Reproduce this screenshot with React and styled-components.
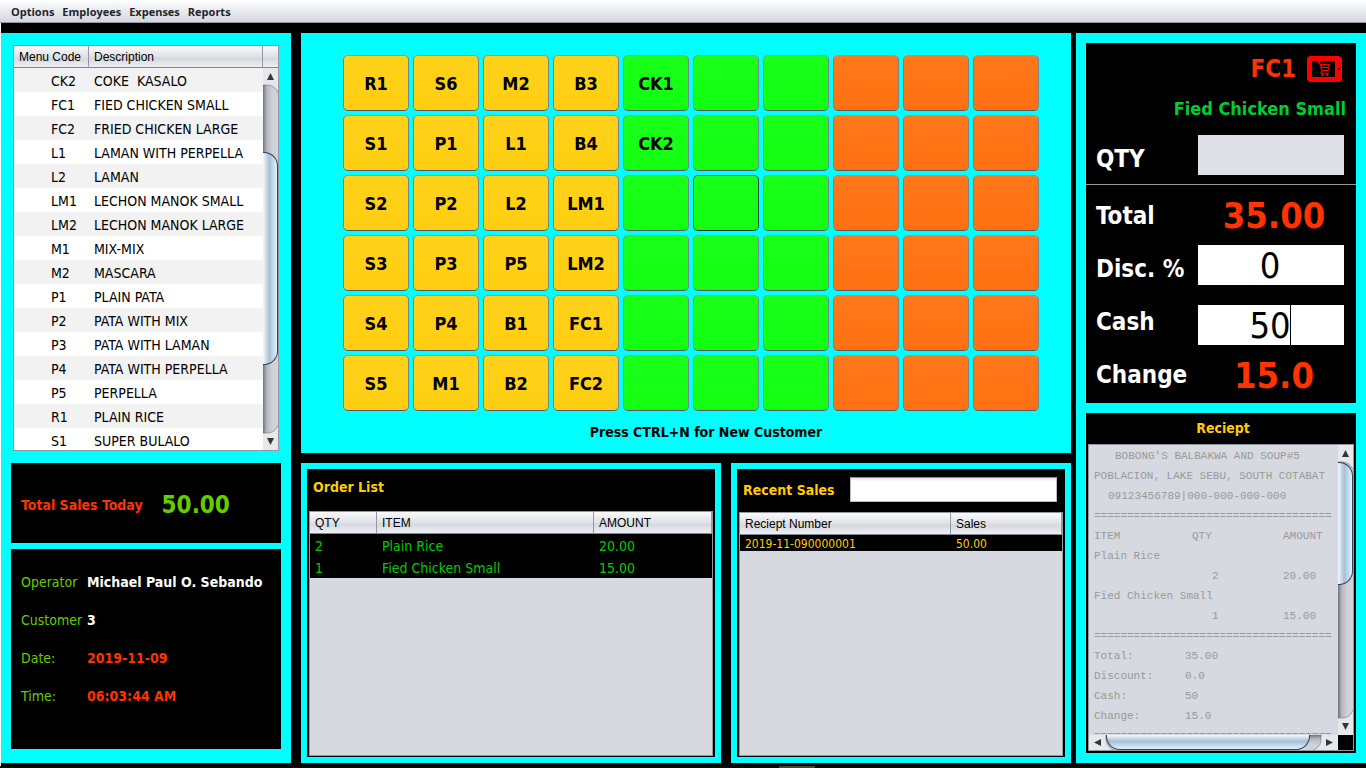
import React from "react";
import styled, { createGlobalStyle, css } from "styled-components";

const ui = '"DejaVu Sans Condensed", "DejaVu Sans", Tahoma, sans-serif';
const headFont = '"Liberation Sans", Arial, sans-serif';

const colors = {
  cyan: "#00ffff",
  red: "#ff3300",
  lime: "#66cc00",
  gold: "#ffcc00",
  pane: "#d6d9df",
};

const GlobalStyle = createGlobalStyle`
  * { box-sizing: border-box; }
  body { margin: 0; background: #000; font-family: ${ui}; font-size: 14px; color: #000; }
  button, input { font: inherit; color: inherit; margin: 0; }
  h2 { margin: 0; }
`;

const Page = styled.div`
  display: flex;
  flex-direction: column;
  min-height: 100vh;
  background: #000;
`;

const MenuBar = styled.nav`
  display: flex;
  align-items: center;
  gap: 8px;
  height: 23px;
  padding: 0 11px;
  background: linear-gradient(#ffffff, #eceef2 40%, #d3d6de);
  border-bottom: 1px solid #9297a1;
`;

const MenuButton = styled.button`
  border: 0;
  padding: 2px 0 0;
  background: none;
  font-family: "Open Sans", "Noto Sans", sans-serif;
  font-size: 11px;
  line-height: 20px;
  font-weight: 700;
  color: #22252b;
`;

const Main = styled.main`
  flex: 1;
  display: flex;
  padding: 10px 0 3px;
  border-left: 1px solid #fff;
`;

const BottomEdge = styled.footer`
  height: 2px;
  padding-left: 57%;
  background: #0a0a0a;
`;

const BottomMark = styled.div`
  width: 36px;
  height: 2px;
  background: #444;
`;

const Side = styled.section`
  flex: none;
  width: 290px;
  display: flex;
  flex-direction: column;
  background: ${colors.cyan};
`;

const LeftSide = styled(Side)`
  padding: 12px 10px 14px;
`;

const RightSide = styled(Side)`
  gap: 10px;
  padding: 10px;
`;

const Center = styled.div`
  flex: 1;
  display: flex;
  flex-direction: column;
  gap: 10px;
  margin: 0 5px 0 10px;
`;

const Card = styled.div`
  background: #000;
`;

const Pane = styled.div`
  flex: 1 1 0;
  min-height: 0;
  display: flex;
  overflow: hidden;
  border: 1px solid #9297a1;
  background: ${(p) => p.$bg || colors.pane};
`;

const MenuPane = styled(Pane)`
  min-height: 240px;
  margin: 0 2px 12px;
`;

const PaneBody = styled.div`
  flex: 1;
  min-width: 0;
  overflow: hidden;
`;

const headBackground = css`
  background: linear-gradient(#fbfbfc, #dfe1e6 50%, #d5d8df 60%, #eef0f4);
  border-bottom: 1px solid #808791;
`;

const Table = styled.table`
  width: 100%;
  table-layout: fixed;
  border-collapse: separate;
  border-spacing: 0;

  th {
    ${headBackground}
    height: 22px;
    padding: 0 5px;
    border-right: 1px solid #9297a1;
    font: 12px/20px ${headFont};
    text-align: left;
    white-space: nowrap;
  }
  td {
    padding: 2px 5px 0;
    white-space: pre;
  }
`;

const MenuTable = styled(Table)`
  td {
    height: 24px;
    font-size: 14px;
    line-height: 22px;
  }
  td:first-child { padding-left: 37px; }
  tbody tr:nth-child(odd) { background: #f2f2f2; }
`;

const OrderTable = styled(Table)`
  td {
    background: #000;
    color: #00cc00;
    height: 22px;
    line-height: 20px;
    font-size: 14px;
  }
`;

const SalesTable = styled(Table)`
  td {
    background: #000;
    color: ${colors.gold};
    height: 16px;
    line-height: 14px;
    font-size: 12px;
  }
`;

const ScrollColumn = styled.div`
  flex: none;
  width: 15px;
  display: flex;
  flex-direction: column;
`;

const HeadCorner = styled.div`
  ${headBackground}
  height: 22px;
`;

const ScrollTrack = styled.div`
  flex: 1;
  display: flex;
  flex-direction: ${(p) => (p.$horizontal ? "row" : "column")};
  background: linear-gradient(${(p) => (p.$horizontal ? "180deg" : "90deg")}, #6e727a, #b4b7be 25%, #cdd0d6 60%, #d3d5da);
`;

const ArrowButton = styled.button`
  flex: none;
  width: ${(p) => (p.$horizontal ? 17 : 15)}px;
  height: ${(p) => (p.$horizontal ? 15 : 17)}px;
  border: 0;
  padding: 0;
  background: none;

  svg { display: block; overflow: visible; }
`;

const Gap = styled.div`
  flex: ${(p) => p.$size} 1 0;
`;

const Thumb = styled.div`
  flex: ${(p) => p.$size} 1 0;
  border: 1px solid #2c4058;
  ${(p) =>
    p.$horizontal
      ? css`
          border-top: 0;
          border-radius: 0 0 14px 14px;
          background: linear-gradient(#f4f8fb, #c9d8e5 25%, #a9bfd4 45%, #c4dcec 75%, #e2f4fd);
        `
      : css`
          border-left: 0;
          border-radius: 0 14px 14px 0;
          background: linear-gradient(90deg, #f4f8fb, #c9d8e5 25%, #a9bfd4 45%, #c4dcec 75%, #e2f4fd);
        `}
`;

const TotalCard = styled(Card)`
  display: flex;
  align-items: center;
  gap: 19px;
  height: 80px;
  padding: 4px 10px 0;
  color: ${colors.red};
  font-weight: 700;
`;

const BigLime = styled.span`
  font-size: 24px;
  color: ${colors.lime};
`;

const InfoCard = styled(Card)`
  margin: 6px 0 0;
  height: 200px;
  padding: 14px 10px;
`;

const InfoList = styled.dl`
  display: grid;
  grid-template-columns: 66px 1fr;
  grid-auto-rows: 38px;
  align-items: center;
  margin: 0;
  white-space: nowrap;

  dt { color: ${colors.lime}; font-size: 14px; }
  dd { margin: 0; font-weight: 700; font-size: 14px; }
`;

const InfoValue = styled.dd`
  color: ${(p) => (p.$alert ? colors.red : "#fff")};
`;

const Keypad = styled.section`
  background: ${colors.cyan};
  padding: 22px 32px 0 42px;
`;

const KeyGrid = styled.div`
  display: grid;
  grid-template-columns: repeat(10, minmax(0, 1fr));
  grid-auto-rows: 56px;
  gap: 4px;
`;

const keyTones = {
  gold: ["#ffd21a", "#ffce12"],
  green: ["#1aff1a", "#12ff12"],
  orange: ["#ff781a", "#ff7012"],
};

const Key = styled.button`
  border: 1px solid;
  border-color: ${(p) => (p.$dark ? "#4a6a50 #3c4a48 #123018" : "#959aa0 #7d8288 #555a60")};
  border-radius: 5px;
  padding: 0;
  background: linear-gradient(${(p) => keyTones[p.$tone].join(", ")});
  font-size: 18px;
  font-weight: 700;
`;

const Hint = styled.p`
  margin: 0;
  padding-left: 30px;
  line-height: 42px;
  font-weight: 700;
  text-align: center;
`;

const Lower = styled.div`
  flex: 1;
  display: grid;
  grid-template-columns: 21fr 17fr;
  gap: 10px;
`;

const ListPanel = styled.section`
  display: flex;
  flex-direction: column;
  min-height: 300px;
  border: 6px solid ${colors.cyan};
  padding: 0 2px 1px;
  background: #000;
`;

const ListHead = styled.header`
  display: flex;
  align-items: center;
  justify-content: space-between;
  height: ${(p) => (p.$search ? 43 : 42)}px;
  padding: ${(p) => (p.$search ? "0 6px 2px 4px" : "0 4px 6px")};
`;

const Title = styled.h2`
  font-size: 14px;
  line-height: 18px;
  font-weight: 700;
  color: ${colors.gold};
`;

const SearchInput = styled.input`
  width: 207px;
  height: 25px;
  border: 1px solid #b8bbc1;
  border-top-color: #8d9096;
  border-radius: 0;
  padding: 0 6px;
  background: linear-gradient(#dddfe2, #fff 3px);
`;

const Register = styled(Card)`
  height: 360px;
  padding-top: 6px;
`;

const CodeRow = styled.div`
  display: flex;
  align-items: center;
  justify-content: flex-end;
  gap: 11px;
  height: 40px;
  padding: 0 14px 0 10px;
  font-size: 24px;
  font-weight: 700;
  color: ${colors.red};
`;

const ItemName = styled.div`
  padding: 0 10px;
  line-height: 40px;
  font-size: 18px;
  font-weight: 700;
  text-align: right;
  color: #00cc33;
`;

const QtyRow = styled.div`
  display: flex;
  align-items: flex-end;
  justify-content: space-between;
  height: 56px;
  padding: 0 12px 9px 10px;
  border-bottom: 1px solid #9297a1;
`;

const FieldLabel = styled.label`
  font-size: 24px;
  line-height: 32px;
  font-weight: 700;
  color: #fff;
  white-space: nowrap;
`;

const Field = styled.input`
  display: block;
  width: 146px;
  height: 40px;
  border: 0;
  border-radius: 0;
  padding: 0 2px 0 0;
  background: #fff;
  font-size: 36px;
  text-align: center;
  caret-color: transparent;

  &:disabled { background: #dde1e6; }
`;

const Sums = styled.div`
  display: flex;
  justify-content: space-between;
  height: 218px;
  padding: 0 12px 0 10px;
`;

const SumLabels = styled.div`
  display: flex;
  flex-direction: column;
  justify-content: space-between;
  padding: 15px 0 12px;
`;

const SumValues = styled.div`
  display: flex;
  flex-direction: column;
  width: 146px;
`;

const Amount = styled.output`
  height: 60px;
  line-height: 62px;
  padding-left: 6px;
  font-size: 36px;
  font-weight: 700;
  text-align: center;
  color: ${colors.red};
`;

const CashField = styled.div`
  position: relative;
  margin-top: 20px;
`;

const Caret = styled.span`
  position: absolute;
  top: 0;
  left: calc(50% + 19px);
  width: 1px;
  height: 40px;
  background: #000;
`;

const ReceiptCard = styled(Card)`
  flex: 1;
  display: flex;
  flex-direction: column;
  min-height: 240px;
  padding: 0 2px 2px;
`;

const ReceiptTitle = styled(Title)`
  line-height: 31px;
  padding-left: 4px;
  text-align: center;
`;

const ReceiptFrame = styled(Pane)`
  flex-direction: column;
`;

const ReceiptTop = styled.div`
  flex: 1 1 0;
  min-height: 0;
  display: flex;
`;

const ReceiptPaper = styled(PaneBody)`
  padding: 1px 0 0 5px;
  font: 11px/20px "Liberation Mono", "Courier New", monospace;
  color: #98999b;
`;

const PaperLine = styled.div`
  height: 20px;
  white-space: pre;
  padding-left: ${(p) => p.$indent || 0}px;
`;

const ItemLine = styled(PaperLine)`
  display: grid;
  grid-template-columns: 98px 91px 1fr;
`;

const QtyCell = styled.span`
  padding-left: 20px;
`;

const SumLine = styled(PaperLine)`
  display: grid;
  grid-template-columns: 91px 1fr;
`;

const BottomScroll = styled.div`
  flex: none;
  display: flex;
  height: 15px;
`;

const Corner = styled.div`
  width: 15px;
  background: #000;
`;

function Arrow({ dir }) {
  const horizontal = dir === "left" || dir === "right";
  const turn = {
    up: undefined,
    down: "matrix(1 0 0 -1 0 17)",
    left: "matrix(0 1 1 0 0 0)",
    right: "matrix(0 1 -1 0 17 0)",
  }[dir];
  return (
    <ArrowButton $horizontal={horizontal} aria-label={`Scroll ${dir}`}>
      <svg width={horizontal ? 17 : 15} height={horizontal ? 15 : 17}>
        <g transform={turn}>
          <path d="M0 0H15V25C13 20 10 17 3 17H0Z" fill="#e6e8ea" />
          <path d="M0 17H3C10 17 13 20 15 25" fill="none" stroke="#6b6f76" strokeOpacity=".6" />
          <path d="M7.5 5L11 12H4Z" fill="#33373d" />
        </g>
      </svg>
    </ArrowButton>
  );
}

function Scrollbar({ horizontal, before, size, after }) {
  return (
    <ScrollTrack $horizontal={horizontal}>
      <Arrow dir={horizontal ? "left" : "up"} />
      <Gap $size={before} />
      <Thumb $size={size} $horizontal={horizontal} />
      <Gap $size={after} />
      <Arrow dir={horizontal ? "right" : "down"} />
    </ScrollTrack>
  );
}

function CartIcon() {
  return (
    <svg width="35" height="26" viewBox="0 0 35 26" aria-hidden="true">
      <path
        fillRule="evenodd"
        fill="#ff0000"
        d="M4 0H31A4 4 0 0 1 35 4V22A4 4 0 0 1 31 26H4A4 4 0 0 1 0 22V4A4 4 0 0 1 4 0ZM5 5V21H28V5ZM31 12V14H33V12Z"
      />
      <path
        fill="none"
        stroke="#ff0000"
        strokeWidth="1.1"
        d="M10.5 6.5H12.5L15 14.5H21L22.5 8.5H13.2M14 11.5H21.8M15 14.5L14 17.2H22"
      />
      <circle cx="15.5" cy="19" r="1.2" fill="#ff0000" />
      <circle cx="20.3" cy="19" r="1.2" fill="#ff0000" />
    </svg>
  );
}

const menus = ["Options", "Employees", "Expenses", "Reports"];

const dishes = [
  ["CK2", "COKE  KASALO"],
  ["FC1", "FIED CHICKEN SMALL"],
  ["FC2", "FRIED CHICKEN LARGE"],
  ["L1", "LAMAN WITH PERPELLA"],
  ["L2", "LAMAN"],
  ["LM1", "LECHON MANOK SMALL"],
  ["LM2", "LECHON MANOK LARGE"],
  ["M1", "MIX-MIX"],
  ["M2", "MASCARA"],
  ["P1", "PLAIN PATA"],
  ["P2", "PATA WITH MIX"],
  ["P3", "PATA WITH LAMAN"],
  ["P4", "PATA WITH PERPELLA"],
  ["P5", "PERPELLA"],
  ["R1", "PLAIN RICE"],
  ["S1", "SUPER BULALO"],
];

const keyRows = [
  ["R1", "S6", "M2", "B3", "CK1"],
  ["S1", "P1", "L1", "B4", "CK2"],
  ["S2", "P2", "L2", "LM1", ""],
  ["S3", "P3", "P5", "LM2", ""],
  ["S4", "P4", "B1", "FC1", ""],
  ["S5", "M1", "B2", "FC2", ""],
];

const columnTones = [
  "gold", "gold", "gold", "gold",
  "green", "green", "green",
  "orange", "orange", "orange",
];

const orders = [
  ["2", "Plain Rice", "20.00"],
  ["1", "Fied Chicken Small", "15.00"],
];

const sums = [
  ["Total:", "35.00"],
  ["Discount:", "0.0"],
  ["Cash:", "50"],
  ["Change:", "15.0"],
];

const rule = "=".repeat(36);

export default function App() {
  return (
    <Page>
      <GlobalStyle />
      <MenuBar>
        {menus.map((m) => (
          <MenuButton key={m}>{m}</MenuButton>
        ))}
      </MenuBar>
      <Main>
        <LeftSide>
          <MenuPane $bg="#fff">
            <PaneBody>
              <MenuTable>
                <colgroup>
                  <col width="75" />
                  <col />
                </colgroup>
                <thead>
                  <tr>
                    <th>Menu Code</th>
                    <th>Description</th>
                  </tr>
                </thead>
                <tbody>
                  {dishes.map(([code, name]) => (
                    <tr key={code}>
                      <td>{code}</td>
                      <td>{name}</td>
                    </tr>
                  ))}
                </tbody>
              </MenuTable>
            </PaneBody>
            <ScrollColumn>
              <HeadCorner />
              <Scrollbar before={67} size={213} after={68} />
            </ScrollColumn>
          </MenuPane>
          <TotalCard>
            <span>Total Sales Today</span>
            <BigLime>50.00</BigLime>
          </TotalCard>
          <InfoCard>
            <InfoList>
              <dt>Operator</dt>
              <InfoValue>Michael Paul O. Sebando</InfoValue>
              <dt>Customer</dt>
              <InfoValue>3</InfoValue>
              <dt>Date:</dt>
              <InfoValue $alert>2019-11-09</InfoValue>
              <dt>Time:</dt>
              <InfoValue $alert>06:03:44 AM</InfoValue>
            </InfoList>
          </InfoCard>
        </LeftSide>

        <Center>
          <Keypad>
            <KeyGrid>
              {keyRows.map((row, r) =>
                columnTones.map((tone, c) => (
                  <Key key={`${r}-${c}`} $tone={tone} $dark={r === 2 && c === 5}>
                    {row[c]}
                  </Key>
                ))
              )}
            </KeyGrid>
            <Hint>Press CTRL+N for New Customer</Hint>
          </Keypad>
          <Lower>
            <ListPanel>
              <ListHead>
                <Title>Order List</Title>
              </ListHead>
              <Pane>
                <PaneBody>
                  <OrderTable>
                    <colgroup>
                      <col width="67" />
                      <col width="217" />
                      <col />
                    </colgroup>
                    <thead>
                      <tr>
                        <th>QTY</th>
                        <th>ITEM</th>
                        <th>AMOUNT</th>
                      </tr>
                    </thead>
                    <tbody>
                      {orders.map((o) => (
                        <tr key={o[1]}>
                          {o.map((cell) => (
                            <td key={cell}>{cell}</td>
                          ))}
                        </tr>
                      ))}
                    </tbody>
                  </OrderTable>
                </PaneBody>
              </Pane>
            </ListPanel>
            <ListPanel>
              <ListHead $search>
                <Title as="label" htmlFor="recent">
                  Recent Sales
                </Title>
                <SearchInput id="recent" />
              </ListHead>
              <Pane>
                <PaneBody>
                  <SalesTable>
                    <colgroup>
                      <col width="211" />
                      <col />
                    </colgroup>
                    <thead>
                      <tr>
                        <th>Reciept Number</th>
                        <th>Sales</th>
                      </tr>
                    </thead>
                    <tbody>
                      <tr>
                        <td>2019-11-090000001</td>
                        <td>50.00</td>
                      </tr>
                    </tbody>
                  </SalesTable>
                </PaneBody>
              </Pane>
            </ListPanel>
          </Lower>
        </Center>

        <RightSide>
          <Register>
            <CodeRow>
              <span>FC1</span>
              <CartIcon />
            </CodeRow>
            <ItemName>Fied Chicken Small</ItemName>
            <QtyRow>
              <FieldLabel htmlFor="qty">QTY</FieldLabel>
              <Field id="qty" disabled />
            </QtyRow>
            <Sums>
              <SumLabels>
                <FieldLabel htmlFor="total">Total</FieldLabel>
                <FieldLabel htmlFor="disc">Disc. %</FieldLabel>
                <FieldLabel htmlFor="cash">Cash</FieldLabel>
                <FieldLabel htmlFor="change">Change</FieldLabel>
              </SumLabels>
              <SumValues>
                <Amount id="total">35.00</Amount>
                <Field id="disc" defaultValue="0" />
                <CashField>
                  <Field id="cash" defaultValue="50" />
                  <Caret />
                </CashField>
                <Amount id="change">15.0</Amount>
              </SumValues>
            </Sums>
          </Register>
          <ReceiptCard>
            <ReceiptTitle>Reciept</ReceiptTitle>
            <ReceiptFrame>
              <ReceiptTop>
                <ReceiptPaper>
                  <PaperLine $indent={21}>BOBONG'S BALBAKWA AND SOUP#5</PaperLine>
                  <PaperLine>POBLACION, LAKE SEBU, SOUTH COTABAT</PaperLine>
                  <PaperLine $indent={14}>09123456789|000-000-000-000</PaperLine>
                  <PaperLine>{rule}</PaperLine>
                  <ItemLine>
                    <span>ITEM</span>
                    <span>QTY</span>
                    <span>AMOUNT</span>
                  </ItemLine>
                  {orders.map(([qty, name, amount]) => (
                    <React.Fragment key={name}>
                      <PaperLine>{name}</PaperLine>
                      <ItemLine>
                        <span />
                        <QtyCell>{qty}</QtyCell>
                        <span>{amount}</span>
                      </ItemLine>
                    </React.Fragment>
                  ))}
                  <PaperLine>{rule}</PaperLine>
                  {sums.map(([label, value]) => (
                    <SumLine key={label}>
                      <span>{label}</span>
                      <span>{value}</span>
                    </SumLine>
                  ))}
                  <PaperLine>{rule}</PaperLine>
                </ReceiptPaper>
                <ScrollColumn>
                  <Scrollbar before={0} size={122} after={134} />
                </ScrollColumn>
              </ReceiptTop>
              <BottomScroll>
                <Scrollbar horizontal before={0} size={204} after={11} />
                <Corner />
              </BottomScroll>
            </ReceiptFrame>
          </ReceiptCard>
        </RightSide>
      </Main>
      <BottomEdge>
        <BottomMark />
      </BottomEdge>
    </Page>
  );
}
